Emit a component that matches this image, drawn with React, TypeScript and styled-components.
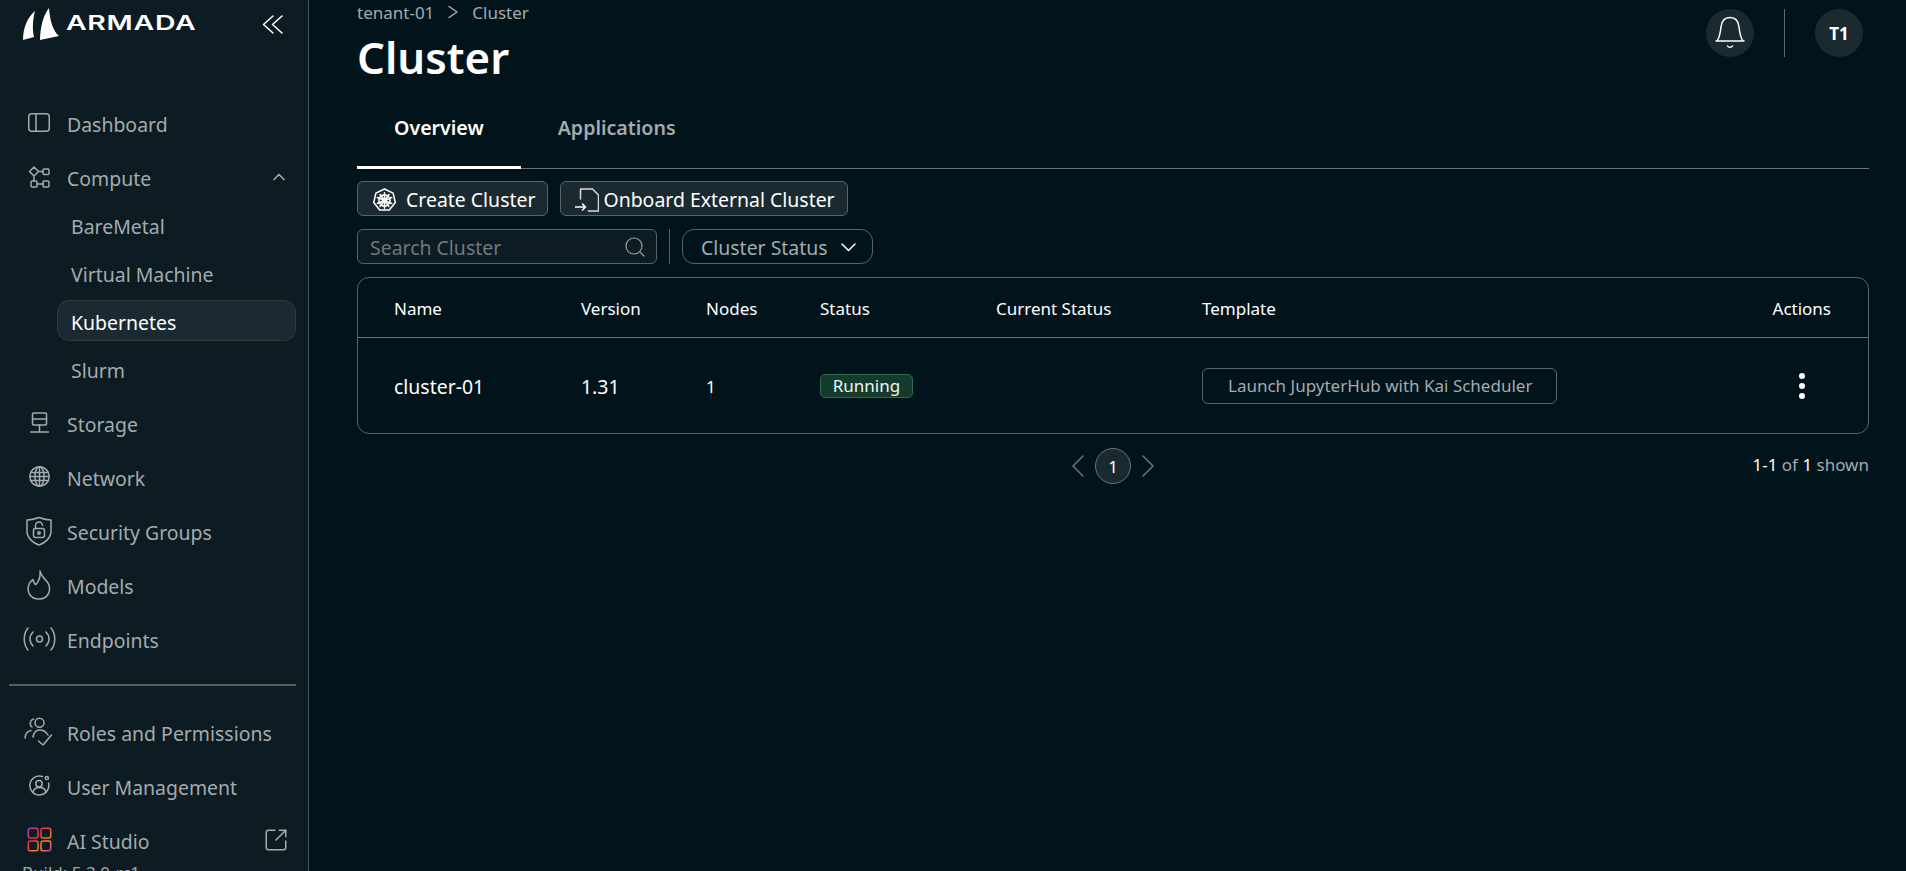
import React from 'react';
import styled, { createGlobalStyle } from 'styled-components';
import { ChevronUp, Search, SquareArrowOutUpRight } from 'lucide-react';

const GlobalStyle = createGlobalStyle`
  html, body {
    margin: 0;
    height: 100%;
    overflow: hidden;
    background: #01141c;
  }
  * {
    box-sizing: border-box;
  }
  body {
    font-family: "Noto Sans", "Open Sans", sans-serif;
    font-size: 19.45px;
    color: #fff;
  }
`;

const Shell = styled.div`
  display: flex;
  width: 1906px;
  height: 871px;
  overflow: hidden;
`;

const Sidebar = styled.aside`
  flex: 0 0 309px;
  height: 871px;
  padding: 0 12px 0 9px;
  background: #0d1b22;
  border-right: 1px solid #4a5459;
  overflow: hidden;
`;

const Brand = styled.div`
  display: flex;
  align-items: center;
  height: 95.5px;
  padding: 0 13px 47.5px 13px;
  color: #fff;
`;

const Wordmark = styled.span`
  display: inline-block;
  margin: 0 0 3px 6px;
  font-family: "Inter", sans-serif;
  font-size: 20px;
  font-weight: 600;
  letter-spacing: 0.5px;
  line-height: 20px;
  transform: scaleX(1.42);
  transform-origin: left center;
`;

const Collapse = styled.span`
  display: flex;
  margin-left: auto;
`;

const Glyph = styled.svg`
  display: block;
  flex: none;
  fill: none;
  stroke: currentColor;
  stroke-width: 1.5;
  stroke-linecap: round;
  stroke-linejoin: round;
`;

const NavItem = styled.div`
  display: flex;
  align-items: center;
  height: 54px;
  padding-left: 11px;
  color: #a4abae;
`;

const NavIcon = styled.span`
  display: flex;
  flex: 0 0 38px;
  align-items: center;
  justify-content: center;
  margin-right: 9px;
`;

const NavLabel = styled.span`
  margin-top: 4px;
`;

const NavTail = styled.span`
  display: flex;
  margin-left: auto;
  margin-right: 7px;
`;

const SubList = styled.div`
  display: flex;
  flex-direction: column;
  gap: 7px;
  padding: 0 0 7px 48px;
`;

const SubItem = styled.div<{ $active?: boolean }>`
  height: 41px;
  padding-left: 13px;
  border: 1px solid ${(p) => (p.$active ? '#2f3b41' : 'transparent')};
  border-radius: 12px;
  background: ${(p) => (p.$active ? '#1b2a31' : 'transparent')};
  color: ${(p) => (p.$active ? '#fff' : '#a4abae')};
  line-height: 43px;
`;

const NavRule = styled.hr`
  height: 2px;
  margin: 18px 0 19px;
  border: 0;
  background: #565f63;
`;

const BuildTag = styled.div`
  margin-top: -4px;
  padding-left: 13px;
  color: #a4abae;
  font-size: 17px;
  line-height: 20px;
`;

const Main = styled.main`
  flex: 1;
  min-width: 0;
  padding: 0 37px 0 48px;
`;

const TopRow = styled.header`
  display: flex;
  justify-content: space-between;
`;

const Crumbs = styled.nav`
  display: flex;
  align-items: center;
  gap: 14px;
  height: 24px;
  color: #a4abae;
  font-size: 17px;
`;

const Title = styled.h1`
  margin: 6px 0 0;
  font-size: 43.76px;
  font-weight: 600;
  line-height: 54px;
`;

const TopActions = styled.div`
  display: flex;
  align-items: center;
  gap: 30px;
  height: 48px;
  margin: 9px 6px 0 0;
`;

const RoundChip = styled.div`
  display: flex;
  align-items: center;
  justify-content: center;
  width: 48px;
  height: 48px;
  border-radius: 50%;
  background: #1b2a31;
  font-size: 17px;
  font-weight: 700;
`;

const TopDivider = styled.span`
  width: 1px;
  height: 48px;
  background: #5d676b;
`;

const Tabs = styled.div`
  display: flex;
  height: 85px;
  border-bottom: 1px solid #6a7377;
`;

const Tab = styled.div<{ $active?: boolean }>`
  display: flex;
  align-items: center;
  height: 85px;
  padding: 4px 37px 0;
  border-bottom: 3px solid ${(p) => (p.$active ? '#fff' : 'transparent')};
  color: ${(p) => (p.$active ? '#fff' : '#a4abae')};
  font-size: 19.6px;
  font-weight: 600;
`;

const Controls = styled.div`
  display: flex;
  flex-direction: column;
  gap: 13px;
  margin-top: 12px;
`;

const Toolbar = styled.div`
  display: flex;
  align-items: center;
  gap: 12px;
`;

const ActionButton = styled.button`
  display: flex;
  align-items: center;
  gap: ${(p: { $gap: number }) => p.$gap}px;
  height: 35px;
  padding: 3px 12px 0 14px;
  border: 1px solid #596469;
  border-radius: 6px;
  background: #1b2a31;
  color: #fff;
  font: inherit;
  line-height: 1;
`;

const SearchBox = styled.label`
  display: flex;
  align-items: center;
  width: 300px;
  height: 35px;
  padding: 0 9px 0 12px;
  border: 1px solid #596469;
  border-radius: 6px;
  background: #0d1b22;
  color: #9aa3a6;
`;

const SearchInput = styled.input`
  flex: 1;
  min-width: 0;
  padding: 2px 0 0;
  border: 0;
  outline: 0;
  background: transparent;
  color: #fff;
  font: inherit;
  &::placeholder {
    color: #6f7a7e;
    opacity: 1;
  }
`;

const ToolDivider = styled.span`
  width: 1px;
  height: 35px;
  background: #596469;
`;

const FilterButton = styled.button`
  display: flex;
  align-items: center;
  gap: 13px;
  height: 35px;
  padding: 2px 16px 0 18px;
  border: 1px solid #596469;
  border-radius: 12px;
  background: transparent;
  color: #a4abae;
  font: inherit;
`;

const Card = styled.section`
  border: 1px solid #596469;
  border-radius: 12px;
`;

const columns = '187px 125px 114px 176px 206px 1fr auto';

const HeadRow = styled.div`
  display: grid;
  grid-template-columns: ${columns};
  align-items: center;
  height: 60px;
  padding: 2px 37px 0 36px;
  border-bottom: 1px solid #6a7377;
  font-size: 17px;
`;

const DataRow = styled.div`
  display: grid;
  grid-template-columns: ${columns};
  align-items: center;
  height: 95px;
  padding: 1px 37px 0 36px;
`;

const SmallCell = styled.span`
  font-size: 17px;
`;

const Badge = styled.span`
  justify-self: start;
  width: 93px;
  border: 1px solid #2a6b4b;
  border-radius: 5px;
  background: #153b2d;
  color: #eef6f1;
  font-size: 17px;
  line-height: 22px;
  text-align: center;
`;

const TemplateTag = styled.span`
  justify-self: start;
  padding: 0 24px 0 25px;
  height: 36px;
  border: 1px solid #596469;
  border-radius: 6px;
  color: #a4abae;
  font-size: 17px;
  line-height: 33px;
`;

const Kebab = styled.span`
  display: flex;
  justify-content: center;
  width: 59px;
`;

const Footer = styled.div`
  position: relative;
  display: flex;
  align-items: center;
  justify-content: center;
  gap: 11px;
  height: 36px;
  margin-top: 14px;
  color: #6a7579;
`;

const PageChip = styled.span`
  display: flex;
  align-items: center;
  justify-content: center;
  width: 36px;
  height: 36px;
  border: 1px solid #6a7377;
  border-radius: 50%;
  background: #1b2a31;
  color: #fff;
  font-size: 17px;
`;

const Shown = styled.div`
  position: absolute;
  top: 5px;
  right: 0;
  color: #a4abae;
  font-size: 17px;
  b {
    color: #fff;
    font-weight: 400;
  }
`;

const DashboardIcon = () => (
  <Glyph width="22" height="19" viewBox="0 0 22 19">
    <rect x="0.75" y="0.75" width="20.5" height="17.5" rx="3" />
    <path d="M8 1v17" />
  </Glyph>
);

const ComputeIcon = () => (
  <Glyph width="22" height="22" viewBox="0 0 22 22" strokeWidth="1.2">
    <path d="M6 1l4.5 4.5L6 10 1.5 5.5zM10.5 5.5H15M6 10v5M9.5 18H15" />
    <rect x="15" y="3" width="6" height="5.5" rx="1" />
    <rect x="3" y="15" width="6" height="6" rx="1" />
    <rect x="15" y="15" width="6" height="6" rx="1" />
  </Glyph>
);

const StorageIcon = () => (
  <Glyph width="19" height="21" viewBox="0 0 19 21">
    <rect x="2.5" y="1" width="14" height="12" rx="1" />
    <path d="M2.5 7h14M9.5 13v7M0.5 20h18" />
  </Glyph>
);

const NetworkIcon = () => (
  <Glyph width="21" height="21" viewBox="0 0 21 21" strokeWidth="1.3">
    <circle cx="10.5" cy="10.5" r="9.7" />
    <ellipse cx="10.5" cy="10.5" rx="4.6" ry="9.7" />
    <path d="M10.5 1v19M1.8 6.500h17.400M1 10.500h19M1.800 14.500h17.400" />
  </Glyph>
);

const ShieldIcon = () => (
  <Glyph width="26" height="30" viewBox="0 0 26 30">
    <path d="M1 4c4 0 8-1 12-2.5C17 3 21 4 25 4v11c0 7-6 12-12 14C7 27 1 22 1 15z" />
    <rect x="7.5" y="12.5" width="11" height="9" rx="2" />
    <path d="M9.5 12.5V9.5a3.5 3.5 0 0 1 7 0" />
    <circle cx="13" cy="17" r="1.2" />
  </Glyph>
);

const FlameIcon = () => (
  <Glyph width="24" height="30" viewBox="0 0 24 30">
    <path d="M13 1c1 5 5 8 8 12 3 5 2 16-9 16-9 0-12-7-10.500-13C2 13 4 11 6 9.500c.5 2.500 1.500 4.500 3 5C12 11 13.500 6 13 1z" />
  </Glyph>
);

const EndpointIcon = () => (
  <Glyph width="33" height="24" viewBox="0 0 33 24">
    <circle cx="16.5" cy="12" r="3" />
    <path d="M10 5c-4 4-4 10 0 14M23 5c4 4 4 10 0 14M5 1C0 7 0 17 5 23M28 1c5 6 5 16 0 22" />
  </Glyph>
);

const RolesIcon = () => (
  <Glyph width="30" height="30" viewBox="0 0 30 30">
    <circle cx="15.500" cy="5.700" r="4.500" />
    <path d="M9 20c1-5 4-7 6.500-7 3.500 0 6.500 1.500 8.500 5M9.500 2C6 3 5 8 8 10M1 21c.5-5 3-7 6-7.500M14.500 24l4.500 4 8.500-10" />
  </Glyph>
);

const UserGearIcon = () => (
  <Glyph width="21" height="21" viewBox="0 0 21 21">
    <path d="M13.500 1.500A9.500 9.500 0 1 0 19.500 8" />
    <circle cx="10" cy="8.700" r="3.200" />
    <path d="M4 17c1-3.500 4-4.500 6.500-4.500S16 13.500 17 17" />
    <circle cx="17.800" cy="3" r="1.600" />
  </Glyph>
);

const StudioIcon = () => (
  <Glyph width="25" height="25" viewBox="0 0 25 25" strokeWidth="2.6">
    <defs>
      <linearGradient id="studioGrad" x1="0" y1="0" x2="25" y2="25" gradientUnits="userSpaceOnUse">
        <stop offset="0" stopColor="#a13fc0" />
        <stop offset="0.35" stopColor="#f5303c" />
        <stop offset="0.72" stopColor="#ff8a35" />
        <stop offset="1" stopColor="#a13fc0" />
      </linearGradient>
    </defs>
    <rect x="1.300" y="1.300" width="9.700" height="9.700" rx="2" stroke="url(#studioGrad)" />
    <rect x="14" y="1.300" width="9.700" height="9.700" rx="2" stroke="url(#studioGrad)" />
    <rect x="1.300" y="14" width="9.700" height="9.700" rx="2" stroke="url(#studioGrad)" />
    <rect x="14" y="14" width="9.700" height="9.700" rx="2" stroke="url(#studioGrad)" />
  </Glyph>
);

const BellIcon = () => (
  <Glyph width="48" height="48" viewBox="0 0 48 48">
    <path d="M10 32h28M11 32c3-4 3.500-10 4-14 .7-7 5-9.500 9-9.500s8.300 2.500 9 9.500c.5 4 1 10 4 14M21.500 37c1 1.800 4 1.800 5 0" />
  </Glyph>
);

const KubeIcon = () => (
  <Glyph width="25" height="25" viewBox="0 0 25 25" strokeWidth="1.3">
    <path d="M12.500 1l8.600 4.200 2.200 9.300-6 7.500H7.700l-6-7.500 2.200-9.300z" />
    <circle cx="12.500" cy="12.500" r="5.600" strokeWidth="1.600" />
    <path d="M12.500 4.800v15.400M5.300 9.500l14.400 6M19.700 9.500l-14.400 6M8 18.500l9-12M17 18.500l-9-12" />
    <circle cx="12.500" cy="12.500" r="2" fill="currentColor" />
  </Glyph>
);

const OnboardIcon = () => (
  <Glyph width="24" height="24" viewBox="0 0 24 24" strokeLinecap="butt">
    <path d="M5.500 11V1H17.500L23.500 7V23H13.500" stroke="#d7dbdc" />
    <path d="M0 19H10.500M7.500 16L10.500 19 7.500 22" />
  </Glyph>
);

const ChevronsIcon = () => (
  <Glyph width="21" height="19" viewBox="0 0 21 19" strokeWidth="2">
    <path d="M11 1L1.500 9.500 11 18M20 1l-9.500 8.500L20 18" />
  </Glyph>
);

const KebabIcon = () => (
  <Glyph width="8" height="28" viewBox="0 0 8 28">
    <circle cx="4" cy="4" r="3" fill="currentColor" stroke="none" />
    <circle cx="4" cy="14" r="3" fill="currentColor" stroke="none" />
    <circle cx="4" cy="24" r="3" fill="currentColor" stroke="none" />
  </Glyph>
);

const CrumbArrow = () => (
  <Glyph width="10" height="12" viewBox="0 0 10 12" strokeWidth="1.2">
    <path d="M1 .5L9 6 1 11.500" />
  </Glyph>
);

const CaretDown = () => (
  <Glyph width="15" height="9" viewBox="0 0 15 9" color="#fff">
    <path d="M1 1l6.500 6.500L14 1" />
  </Glyph>
);

const PagePrev = () => (
  <Glyph width="12" height="22" viewBox="0 0 12 22" strokeWidth="1.4">
    <path d="M11 1L1 11l10 10" />
  </Glyph>
);

const PageNext = () => (
  <Glyph width="12" height="22" viewBox="0 0 12 22" strokeWidth="1.4">
    <path d="M1 1l10 10L1 21" />
  </Glyph>
);

const Item = ({ icon, label, tail }: { icon: React.ReactNode; label: string; tail?: React.ReactNode }) => (
  <NavItem>
    <NavIcon>{icon}</NavIcon>
    <NavLabel>{label}</NavLabel>
    {tail && <NavTail>{tail}</NavTail>}
  </NavItem>
);

const App = () => {
  return (
    <Shell>
      <GlobalStyle />
      <Sidebar>
        <Brand>
          <Glyph width="38" height="34" viewBox="22 6 38 34" stroke="none">
            <path fill="currentColor" stroke="none" d="M35 10C27 17 23 27 23 39l11-3c-2-9-1-18 1-26z" />
            <path fill="currentColor" stroke="none" d="M49 7c1 13 4 23 10 28l-19 4c0-11 3-25 9-32z" />
          </Glyph>
          <Wordmark>ARMADA</Wordmark>
          <Collapse>
            <ChevronsIcon />
          </Collapse>
        </Brand>
        <Item icon={<DashboardIcon />} label="Dashboard" />
        <Item icon={<ComputeIcon />} label="Compute" tail={<ChevronUp size={20} />} />
        <SubList>
          <SubItem>BareMetal</SubItem>
          <SubItem>Virtual Machine</SubItem>
          <SubItem $active>Kubernetes</SubItem>
          <SubItem>Slurm</SubItem>
        </SubList>
        <Item icon={<StorageIcon />} label="Storage" />
        <Item icon={<NetworkIcon />} label="Network" />
        <Item icon={<ShieldIcon />} label="Security Groups" />
        <Item icon={<FlameIcon />} label="Models" />
        <Item icon={<EndpointIcon />} label="Endpoints" />
        <NavRule />
        <Item icon={<RolesIcon />} label="Roles and Permissions" />
        <Item icon={<UserGearIcon />} label="User Management" />
        <Item icon={<StudioIcon />} label="AI Studio" tail={<SquareArrowOutUpRight size={26} strokeWidth={1.4} />} />
        <BuildTag>Build: 5.3.0-rc1</BuildTag>
      </Sidebar>
      <Main>
        <TopRow>
          <div>
            <Crumbs>
              tenant-01
              <CrumbArrow />
              Cluster
            </Crumbs>
            <Title>Cluster</Title>
          </div>
          <TopActions>
            <RoundChip>
              <BellIcon />
            </RoundChip>
            <TopDivider />
            <RoundChip>T1</RoundChip>
          </TopActions>
        </TopRow>
        <Tabs>
          <Tab $active>Overview</Tab>
          <Tab>Applications</Tab>
        </Tabs>
        <Controls>
          <Toolbar>
            <ActionButton $gap={9}>
              <KubeIcon />
              Create Cluster
            </ActionButton>
            <ActionButton $gap={4}>
              <OnboardIcon />
              Onboard External Cluster
            </ActionButton>
          </Toolbar>
          <Toolbar>
            <SearchBox>
              <SearchInput placeholder="Search Cluster" />
              <Search size={24} strokeWidth={1.2} />
            </SearchBox>
            <ToolDivider />
            <FilterButton>
              Cluster Status
              <CaretDown />
            </FilterButton>
          </Toolbar>
          <Card>
            <HeadRow>
              <span>Name</span>
              <span>Version</span>
              <span>Nodes</span>
              <span>Status</span>
              <span>Current Status</span>
              <span>Template</span>
              <span>Actions</span>
            </HeadRow>
            <DataRow>
              <span>cluster-01</span>
              <span>1.31</span>
              <SmallCell>1</SmallCell>
              <Badge>Running</Badge>
              <span />
              <TemplateTag>Launch JupyterHub with Kai Scheduler</TemplateTag>
              <Kebab>
                <KebabIcon />
              </Kebab>
            </DataRow>
          </Card>
        </Controls>
        <Footer>
          <PagePrev />
          <PageChip>1</PageChip>
          <PageNext />
          <Shown>
            <b>1-1</b> of <b>1</b> shown
          </Shown>
        </Footer>
      </Main>
    </Shell>
  );
};

export default App;
